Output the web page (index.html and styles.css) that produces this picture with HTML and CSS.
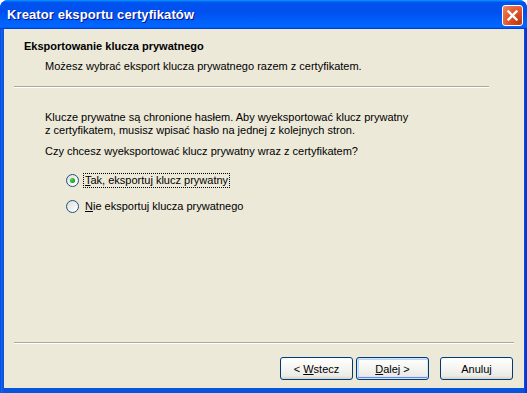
FILE: index.html
```html
<!DOCTYPE html>
<html lang="pl">
<head>
  <meta charset="UTF-8">
  <title>Kreator eksportu certyfikatów</title>
  <link rel="stylesheet" href="styles.css">
</head>
<body>
  <div class="window">
    <div class="titlebar">
      <span class="title">Kreator eksportu certyfikatów</span>
      <button class="close" title="Zamknij">
        <svg width="13" height="13" viewBox="0 0 13 13">
          <path d="M2.5 2.5 L10.5 10.5 M10.5 2.5 L2.5 10.5" stroke="#fff" stroke-width="2.4" stroke-linecap="square"/>
        </svg>
      </button>
    </div>
    <div class="client">
      <div class="header">
        <div class="head-title">Eksportowanie klucza prywatnego</div>
        <div class="head-sub">Możesz wybrać eksport klucza prywatnego razem z certyfikatem.</div>
      </div>
      <div class="sep top-sep"></div>
      <div class="content">
        <p class="info">Klucze prywatne są chronione hasłem. Aby wyeksportować klucz prywatny<br>z certyfikatem, musisz wpisać hasło na jednej z kolejnych stron.</p>
        <p class="question">Czy chcesz wyeksportować klucz prywatny wraz z certyfikatem?</p>
        <label class="radio-row">
          <span class="radio checked"></span>
          <span class="radio-label focused"><u>T</u>ak, eksportuj klucz prywatny</span>
        </label>
        <label class="radio-row">
          <span class="radio"></span>
          <span class="radio-label"><u>N</u>ie eksportuj klucza prywatnego</span>
        </label>
      </div>
      <div class="footer">
        <div class="sep bottom-sep"></div>
        <div class="buttons">
          <button class="btn">&lt; <u>W</u>stecz</button>
          <button class="btn default"><u>D</u>alej &gt;</button>
          <button class="btn cancel">Anuluj</button>
        </div>
      </div>
    </div>
  </div>
</body>
</html>
```

FILE: styles.css
```css
body {
  margin: 0;
  font-family: "Liberation Sans", Arial, sans-serif;
  font-size: 11px;
  color: #000;
  background: #fff;
}
.window {
  width: 527px;
  height: 393px;
  display: flex;
  flex-direction: column;
  background: linear-gradient(to right, #0831d9 0, #166aee 1px, #0855dd 3px, #0855dd 524px, #0831d9 526px);
  border-radius: 8px 8px 0 0;
  overflow: hidden;
}
.titlebar {
  height: 29px;
  display: flex;
  align-items: center;
  justify-content: space-between;
  padding: 0 4px 0 7px;
  background: linear-gradient(#0997ff 0, #0053ee 8%, #0050ee 40%, #0066ff 88%, #0066ff 93%, #005bff 95%, #003dd7 96%, #003dd7 100%);
}
.title {
  color: #fff;
  font-weight: bold;
  font-size: 13px;
  letter-spacing: 0.1px;
  text-shadow: 1px 1px #0f1089;
}
.close {
  width: 21px;
  height: 21px;
  margin-top: 2px;
  padding: 0;
  display: flex;
  align-items: center;
  justify-content: center;
  border: 1px solid #fff;
  border-radius: 3px;
  background: radial-gradient(circle at 85% 85%, #c13a12 0, #e2532a 50%, #f08a66 100%);
}
.client {
  flex: 1;
  margin: 0 3px 5px 4px;
  background: #ece9d8;
  display: flex;
  flex-direction: column;
  line-height: 13px;
}
.header {
  padding: 11px 0 0 20px;
}
.head-title {
  font-weight: bold;
}
.head-sub {
  margin-top: 7px;
  padding-left: 21px;
}
.sep {
  height: 0;
  border-top: 1px solid #aca899;
  border-bottom: 1px solid #fff;
}
.top-sep {
  margin: 13px 35px 0 10px;
}
.content {
  padding-left: 41px;
}
.info {
  margin: 23px 0 0;
}
.question {
  margin: 8px 0 0;
}
.radio-row {
  display: flex;
  align-items: center;
  gap: 4px;
  margin-left: 21px;
  height: 17px;
}
.radio-row:first-of-type {
  margin-top: 14px;
}
.radio-row + .radio-row {
  margin-top: 9px;
}
.radio {
  width: 11px;
  height: 11px;
  border: 1px solid #1c5180;
  border-radius: 50%;
  background: linear-gradient(135deg, #dcdcd7 0, #fff 90%);
  display: flex;
  align-items: center;
  justify-content: center;
}
.radio.checked::after {
  content: "";
  width: 5px;
  height: 5px;
  border-radius: 50%;
  background: radial-gradient(circle at 35% 35%, #55d551 0, #21a121 60%, #169614 100%);
}
.radio-label {
  padding: 0 1px;
  border: 1px dotted transparent;
}
.radio-label.focused {
  border-color: #000;
}
.footer {
  margin-top: auto;
}
.bottom-sep {
  margin: 0 10px 0 10px;
}
.buttons {
  display: flex;
  justify-content: flex-end;
  gap: 3px;
  padding: 13px 11px 8px 0;
}
.btn {
  width: 73px;
  height: 23px;
  padding: 0;
  font-family: "Liberation Sans", Arial, sans-serif;
  font-size: 11px;
  color: #000;
  border: 1px solid #003c74;
  border-radius: 3px;
  background: linear-gradient(#fff 0, #f4f4f0 50%, #ecebe6 85%, #d6d0c5 100%);
}
.btn.default {
  box-shadow: inset 0 0 0 1px #cee7ff, inset 0 -1px 0 1px #6982ee, inset 1px 1px 0 1px #bcd4f6;
}
.btn.cancel {
  margin-left: 8px;
}
```
